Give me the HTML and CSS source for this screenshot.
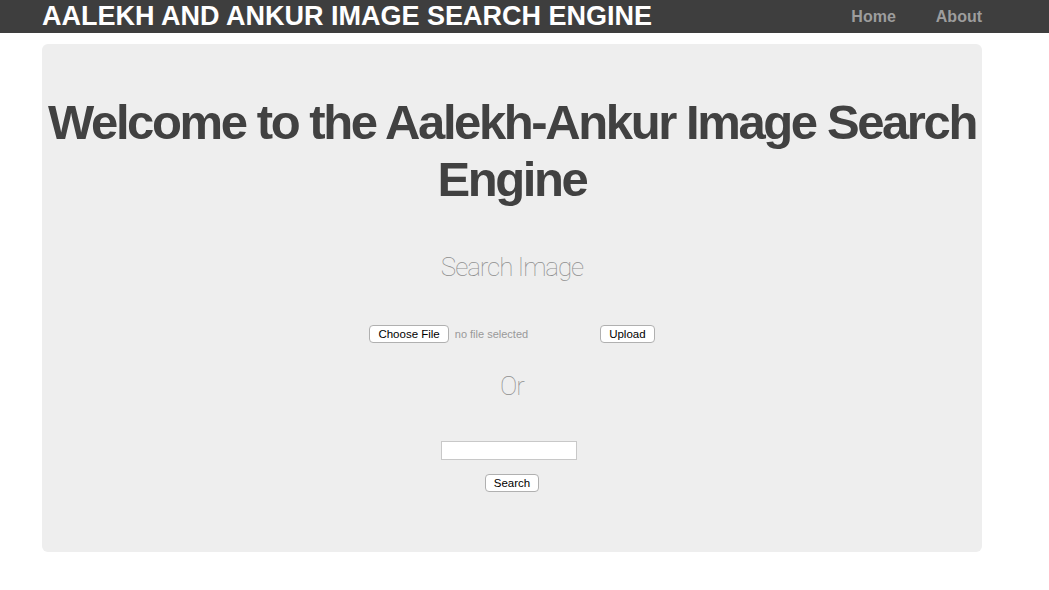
FILE: index.html
```html
<!DOCTYPE html>
<html lang="en">
<head>
  <meta charset="UTF-8">
  <meta name="viewport" content="width=device-width, initial-scale=1">
  <title>Aalekh and Ankur Image Search Engine</title>
  <link rel="stylesheet" href="styles.css">
</head>
<body>
  <div class="navbar">
    <div class="nav-inner">
      <a class="brand" href="#">AALEKH AND ANKUR IMAGE SEARCH ENGINE</a>
      <ul class="nav-links">
        <li><a href="#">Home</a></li>
        <li><a href="#">About</a></li>
      </ul>
    </div>
  </div>

  <div class="container">
    <div class="jumbotron">
      <h1>Welcome to the Aalekh-Ankur Image Search Engine</h1>
      <h2 class="sub">Search Image</h2>

      <form class="upload-form">
        <label class="file-pick">
          <input type="file" class="file-input">
          <span class="btn">Choose File</span>
          <span class="file-name">no file selected</span>
        </label>
        <button type="submit" class="btn">Upload</button>
      </form>

      <h2 class="sub or">Or</h2>

      <form class="search-form">
        <input type="text" class="text-input">
        <button type="submit" class="btn">Search</button>
      </form>
    </div>
  </div>
</body>
</html>
```

FILE: styles.css
```css
body {
  margin: 0;
  font-family: "Liberation Sans", Arial, sans-serif;
  background-color: #fff;
}
.navbar {
  background-color: #3e3e3e;
  height: 33px;
}
.nav-inner {
  width: 940px;
  margin-left: 42px;
  display: flex;
  align-items: center;
  justify-content: space-between;
  height: 33px;
}
.brand {
  color: #fff;
  font-weight: bold;
  font-size: 27px;
  text-decoration: none;
  line-height: 33px;
}
.nav-links {
  list-style: none;
  margin: 0;
  padding: 0;
  display: flex;
  gap: 40px;
}
.nav-links a {
  color: #9d9d9d;
  font-weight: bold;
  font-size: 16px;
  text-decoration: none;
}
.container {
  width: 940px;
  margin-left: 42px;
  padding-top: 11px;
}
.jumbotron {
  background-color: #eee;
  border-radius: 6px;
  height: 508px;
  text-align: center;
  padding-top: 50px;
  box-sizing: border-box;
}
h1 {
  margin: 0;
  color: #414141;
  font-size: 49px;
  line-height: 57px;
  letter-spacing: -2.4px;
  font-weight: bold;
}
.sub {
  margin: 44px 0 0;
  font-family: Roboto, "Liberation Sans", sans-serif;
  font-weight: 100;
  font-size: 26px;
  color: #8f8f8f;
  letter-spacing: -1.1px;
}
.upload-form {
  margin-top: 43px;
  display: flex;
  justify-content: center;
  align-items: center;
  gap: 72px;
}
.file-pick {
  display: flex;
  align-items: center;
  gap: 6px;
  cursor: pointer;
}
.file-input {
  display: none;
}
.file-name {
  font-size: 11px;
  color: #999;
}
.btn {
  display: inline-block;
  font-family: "Liberation Sans", Arial, sans-serif;
  font-size: 11.5px;
  line-height: 16px;
  color: #000;
  background: #fff;
  border: 1px solid #b0b0b0;
  border-radius: 4px;
  padding: 0 8px;
}
.or {
  margin-top: 28px;
}
.search-form {
  margin-top: 40px;
  display: flex;
  flex-direction: column;
  align-items: center;
  gap: 14px;
}
.text-input {
  width: 130px;
  height: 15px;
  border: 1px solid #c8c8c8;
  margin-right: 6px;
}
```
